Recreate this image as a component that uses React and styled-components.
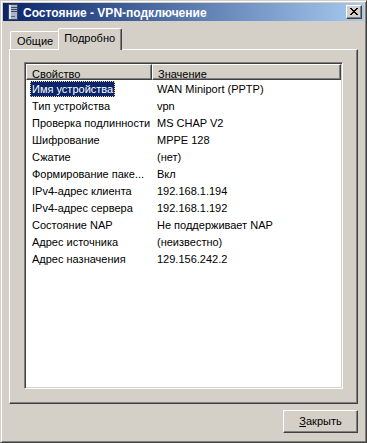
import styled, { createGlobalStyle } from 'styled-components';

const GlobalStyle = createGlobalStyle`
    body {
        margin: 0;
        font-family: 'Liberation Sans', Arial, sans-serif;
        font-size: 11px;
        background: #d4d0c8;
    }
`;

const Window = styled.div`
    width: 367px;
    height: 443px;
    box-sizing: border-box;
    background: #d4d0c8;
    border: 1px solid;
    border-color: #d4d0c8 #404040 #404040 #d4d0c8;
    box-shadow: inset 1px 1px #ffffff, inset -1px -1px #808080;
    padding: 2px;
    display: flex;
    flex-direction: column;
`;

const TitleBar = styled.div`
    height: 18px;
    display: flex;
    align-items: center;
    padding: 0 2px 0 5px;
    background: linear-gradient(to right, #0a246a, #a6caf0);
`;

const TitleText = styled.span`
    flex: 1;
    margin-left: 5px;
    padding-top: 1px;
    color: #ffffff;
    font-weight: bold;
    font-size: 12px;
    white-space: nowrap;
`;

const CloseButton = styled.div`
    width: 16px;
    height: 14px;
    box-sizing: border-box;
    background: #d4d0c8;
    border: 1px solid;
    border-color: #ffffff #404040 #404040 #ffffff;
    box-shadow: inset -1px -1px #808080;
    display: flex;
    align-items: center;
    justify-content: center;
    padding: 0 1px 1px 0;
`;

const Body = styled.div`
    flex: 1;
    display: flex;
    flex-direction: column;
    padding: 7px 6px 0 6px;
`;

const TabStrip = styled.div`
    height: 21px;
    display: flex;
    align-items: flex-end;
    padding-left: 1px;
`;

const Tab = styled.div`
    position: relative;
    box-sizing: border-box;
    height: ${(p) => (p.$active ? '22px' : '18px')};
    margin-left: ${(p) => (p.$active ? '-2px' : '0')};
    margin-bottom: ${(p) => (p.$active ? '-1px' : '0')};
    padding: 3px ${(p) => (p.$active ? '6px 0 5px' : '6px 0 6px')};
    line-height: 13px;
    background: #d4d0c8;
    border-top: 1px solid #ffffff;
    border-left: 1px solid #ffffff;
    border-right: 1px solid #404040;
    border-radius: 2px 2px 0 0;
    box-shadow: inset -1px 0 #808080;
    z-index: ${(p) => (p.$active ? 2 : 1)};
    white-space: nowrap;
`;

const Panel = styled.div`
    height: 355px;
    box-sizing: border-box;
    display: flex;
    flex-direction: column;
    padding: 12px 14px 14px 14px;
    border: 1px solid;
    border-color: #ffffff #404040 #404040 #ffffff;
    box-shadow: inset -1px -1px #808080;
`;

const ListBox = styled.div`
    flex: 1;
    background: #ffffff;
    border: 1px solid;
    border-color: #808080 #ffffff #ffffff #808080;
    box-shadow: inset 1px 1px #404040, inset -1px -1px #d4d0c8;
    padding: 1px;
    overflow: hidden;
`;

const Header = styled.div`
    display: flex;
    height: 16px;
    margin-bottom: 1px;
`;

const HeaderCell = styled.div`
    box-sizing: border-box;
    width: ${(p) => p.$w};
    flex: ${(p) => (p.$grow ? 1 : 'none')};
    height: 16px;
    padding: 3px 0 0 5px;
    line-height: 13px;
    background: #d4d0c8;
    border-top: 1px solid #ffffff;
    border-left: 1px solid #ffffff;
    border-right: 1px solid #404040;
    border-bottom: 1px solid #404040;
    box-shadow: inset -1px -1px #808080;
    white-space: nowrap;
    overflow: hidden;
`;

const Row = styled.div`
    display: flex;
    height: 17px;
`;

const Cell = styled.div`
    box-sizing: border-box;
    width: ${(p) => p.$w};
    flex: ${(p) => (p.$grow ? 1 : 'none')};
    padding-left: 4px;
    white-space: nowrap;
    overflow: hidden;
`;

const Label = styled.span`
    display: inline-block;
    height: 16px;
    box-sizing: border-box;
    padding: 0 1px;
    line-height: 14px;
    border: 1px dotted ${(p) => (p.$selected ? '#f3d98c' : 'transparent')};
    background: ${(p) => (p.$selected ? '#0a246a' : 'transparent')};
    color: ${(p) => (p.$selected ? '#ffffff' : '#000000')};
`;

const Footer = styled.div`
    display: flex;
    justify-content: flex-end;
    padding-top: 6px;
`;

const Button = styled.div`
    width: 75px;
    height: 23px;
    box-sizing: border-box;
    display: flex;
    align-items: center;
    justify-content: center;
    background: #d4d0c8;
    border: 1px solid;
    border-color: #ffffff #404040 #404040 #ffffff;
    box-shadow: inset -1px -1px #808080;
    padding-bottom: 1px;
    u {
        text-decoration: underline;
    }
`;

const rows = [
    ['Имя устройства', 'WAN Miniport (PPTP)'],
    ['Тип устройства', 'vpn'],
    ['Проверка подлинности', 'MS CHAP V2'],
    ['Шифрование', 'MPPE 128'],
    ['Сжатие', '(нет)'],
    ['Формирование паке...', 'Вкл'],
    ['IPv4-адрес клиента', '192.168.1.194'],
    ['IPv4-адрес сервера', '192.168.1.192'],
    ['Состояние NAP', 'Не поддерживает NAP'],
    ['Адрес источника', '(неизвестно)'],
    ['Адрес назначения', '129.156.242.2'],
];

// pixel pattern of the classic close glyph
const crossPixels = [
    'XX....XX',
    '.XX..XX.',
    '..XXXX..',
    '...XX...',
    '..XXXX..',
    '.XX..XX.',
    'XX....XX',
];

const CrossIcon = () => (
    <svg width="8" height="7" viewBox="0 0 8 7" shapeRendering="crispEdges">
        {crossPixels.map((line, y) =>
            line.split('').map((c, x) =>
                c === 'X' ? <rect key={`${x}-${y}`} x={x} y={y} width="1" height="1" fill="#000" /> : null
            )
        )}
    </svg>
);

const TowerIcon = () => (
    <svg width="10" height="16" viewBox="0 0 10 16" shapeRendering="crispEdges">
        <rect x="0.5" y="0.5" width="9" height="15" fill="#aab4c8" stroke="#3c4660" />
        <rect x="1" y="1" width="2" height="14" fill="#dfe4ee" />
        <rect x="3" y="3" width="6" height="1" fill="#3c4660" />
        <rect x="3" y="5" width="6" height="1" fill="#3c4660" />
        <rect x="3" y="7" width="6" height="1" fill="#3c4660" />
        <rect x="3" y="12" width="4" height="1" fill="#5c6680" />
    </svg>
);

const App = () => {
    return (
        <>
            <GlobalStyle />
            <Window>
                <TitleBar>
                    <TowerIcon />
                    <TitleText>Состояние - VPN-подключение</TitleText>
                    <CloseButton>
                        <CrossIcon />
                    </CloseButton>
                </TitleBar>
                <Body>
                    <TabStrip>
                        <Tab>Общие</Tab>
                        <Tab $active>Подробно</Tab>
                    </TabStrip>
                    <Panel>
                        <ListBox>
                            <Header>
                                <HeaderCell $w="126px">Свойство</HeaderCell>
                                <HeaderCell $grow>Значение</HeaderCell>
                            </Header>
                            {rows.map(([name, value], i) => (
                                <Row key={name}>
                                    <Cell $w="125px">
                                        <Label $selected={i === 0}>{name}</Label>
                                    </Cell>
                                    <Cell $grow>
                                        <Label>{value}</Label>
                                    </Cell>
                                </Row>
                            ))}
                        </ListBox>
                    </Panel>
                    <Footer>
                        <Button>
                            <span><u>З</u>акрыть</span>
                        </Button>
                    </Footer>
                </Body>
            </Window>
        </>
    );
};

export default App;
